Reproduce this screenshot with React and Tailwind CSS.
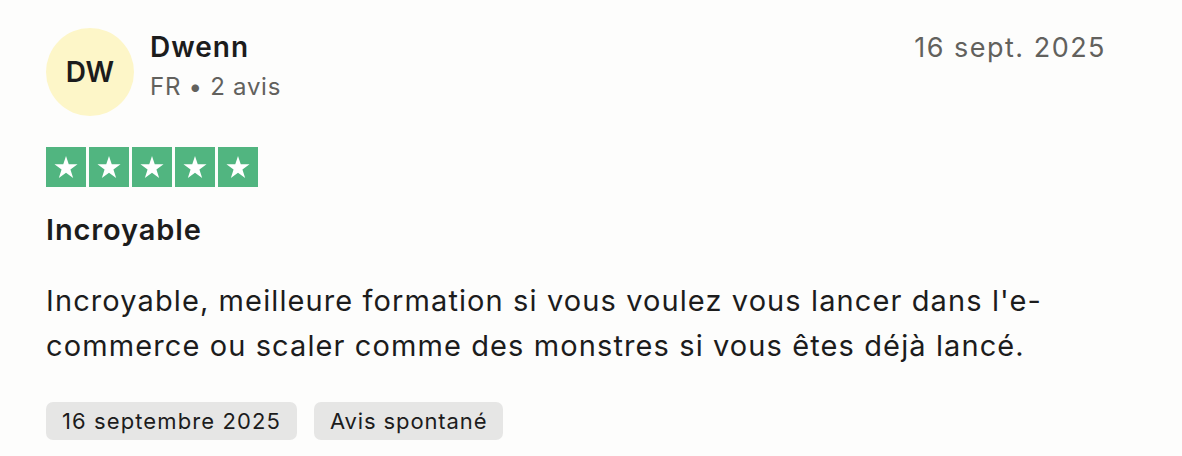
import React from 'react'

function Star() {
  return (
    <div className="w-[40px] h-[40px] bg-[#51b580] flex items-center justify-center">
      <svg width="28" height="28" viewBox="0 0 24 24">
        <path
          d="M12 2.5l2.35 7.2h7.55l-6.1 4.45 2.33 7.2L12 16.9l-6.13 4.45 2.33-7.2L2.1 9.7h7.55z"
          fill="#fff"
        />
      </svg>
    </div>
  )
}

export default function App() {
  return (
    <div
      className="w-[1182px] h-[456px] bg-[#fdfdfc] text-[#1c1c1c] px-[46px] pt-[28px] tracking-[0.05em]"
      style={{ fontFamily: 'Inter, "Noto Sans", sans-serif' }}
    >
      <div className="w-[1060px]">
        <div className="flex justify-between items-start">
          <div className="flex items-center gap-[16px]">
            <div className="w-[88px] h-[88px] rounded-full bg-[#fdf6c8] flex items-center justify-center text-[28px] font-semibold tracking-normal">
              DW
            </div>
            <div className="flex flex-col mt-[-12px]">
              <span className="text-[28px] font-semibold leading-[36px] tracking-[0.035em]">Dwenn</span>
              <span className="text-[24px] text-[#62615d] leading-[32px] mt-[6px] tracking-[0.03em]">FR • 2 avis</span>
            </div>
          </div>
          <span className="text-[27px] text-[#62615d] tracking-[0.055em]">16 sept. 2025</span>
        </div>

        <div className="flex gap-[3px] mt-[31px]">
          <Star />
          <Star />
          <Star />
          <Star />
          <Star />
        </div>

        <h2 className="text-[29px] font-semibold mt-[25px] leading-[36px] tracking-[0.03em]">Incroyable</h2>

        <p className="text-[29px] leading-[45px] mt-[30px] tracking-[0.038em]">
          Incroyable, meilleure formation si vous voulez vous lancer dans l'e-commerce ou scaler comme des monstres si vous êtes déjà lancé.
        </p>

        <div className="flex gap-[17px] mt-[34px]">
          <span className="bg-[#e6e6e5] rounded-[7px] px-[16px] h-[38px] flex items-center text-[22px] tracking-[0.05em]">16 septembre 2025</span>
          <span className="bg-[#e6e6e5] rounded-[7px] px-[16px] h-[38px] flex items-center text-[22px] tracking-[0.04em]">Avis spontané</span>
        </div>
      </div>
    </div>
  )
}
